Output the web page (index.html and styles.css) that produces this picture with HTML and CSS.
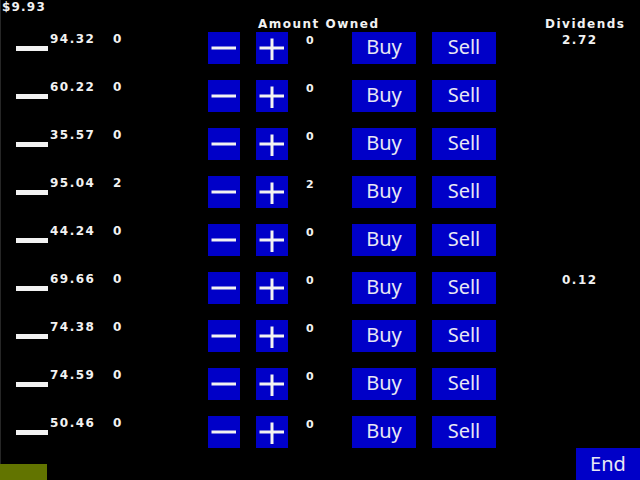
FILE: index.html
```html
<!DOCTYPE html>
<html>
<head>
<meta charset="utf-8">
<link rel="stylesheet" href="styles.css">
</head>
<body>
<div class="screen">
  <div class="money">$9.93</div>
  <div class="header">
    <span class="h-amount">Amount Owned</span>
    <span class="h-div">Dividends</span>
  </div>
  <div class="rows">
    <div class="row">
      <div class="bar-cell"><div class="bar"></div></div>
      <div class="price">94.32</div>
      <div class="owned">0</div>
      <div class="btn sq minus"><svg viewBox="0 0 32 32" width="32" height="32"><rect x="3.5" y="14.5" width="24.5" height="3" fill="#f2f2f2"/></svg></div>
      <div class="btn sq plus"><svg viewBox="0 0 32 32" width="32" height="32"><rect x="3.5" y="14.5" width="24.5" height="3" fill="#f2f2f2"/><rect x="14.5" y="6.5" width="3" height="21.5" fill="#f2f2f2"/></svg></div>
      <div class="amount">0</div>
      <div class="btn wide buy">Buy</div>
      <div class="btn wide sell">Sell</div>
      <div class="div">2.72</div>
    </div>
    <div class="row">
      <div class="bar-cell"><div class="bar"></div></div>
      <div class="price">60.22</div>
      <div class="owned">0</div>
      <div class="btn sq minus"><svg viewBox="0 0 32 32" width="32" height="32"><rect x="3.5" y="14.5" width="24.5" height="3" fill="#f2f2f2"/></svg></div>
      <div class="btn sq plus"><svg viewBox="0 0 32 32" width="32" height="32"><rect x="3.5" y="14.5" width="24.5" height="3" fill="#f2f2f2"/><rect x="14.5" y="6.5" width="3" height="21.5" fill="#f2f2f2"/></svg></div>
      <div class="amount">0</div>
      <div class="btn wide buy">Buy</div>
      <div class="btn wide sell">Sell</div>
      <div class="div"></div>
    </div>
    <div class="row">
      <div class="bar-cell"><div class="bar"></div></div>
      <div class="price">35.57</div>
      <div class="owned">0</div>
      <div class="btn sq minus"><svg viewBox="0 0 32 32" width="32" height="32"><rect x="3.5" y="14.5" width="24.5" height="3" fill="#f2f2f2"/></svg></div>
      <div class="btn sq plus"><svg viewBox="0 0 32 32" width="32" height="32"><rect x="3.5" y="14.5" width="24.5" height="3" fill="#f2f2f2"/><rect x="14.5" y="6.5" width="3" height="21.5" fill="#f2f2f2"/></svg></div>
      <div class="amount">0</div>
      <div class="btn wide buy">Buy</div>
      <div class="btn wide sell">Sell</div>
      <div class="div"></div>
    </div>
    <div class="row">
      <div class="bar-cell"><div class="bar"></div></div>
      <div class="price">95.04</div>
      <div class="owned">2</div>
      <div class="btn sq minus"><svg viewBox="0 0 32 32" width="32" height="32"><rect x="3.5" y="14.5" width="24.5" height="3" fill="#f2f2f2"/></svg></div>
      <div class="btn sq plus"><svg viewBox="0 0 32 32" width="32" height="32"><rect x="3.5" y="14.5" width="24.5" height="3" fill="#f2f2f2"/><rect x="14.5" y="6.5" width="3" height="21.5" fill="#f2f2f2"/></svg></div>
      <div class="amount">2</div>
      <div class="btn wide buy">Buy</div>
      <div class="btn wide sell">Sell</div>
      <div class="div"></div>
    </div>
    <div class="row">
      <div class="bar-cell"><div class="bar"></div></div>
      <div class="price">44.24</div>
      <div class="owned">0</div>
      <div class="btn sq minus"><svg viewBox="0 0 32 32" width="32" height="32"><rect x="3.5" y="14.5" width="24.5" height="3" fill="#f2f2f2"/></svg></div>
      <div class="btn sq plus"><svg viewBox="0 0 32 32" width="32" height="32"><rect x="3.5" y="14.5" width="24.5" height="3" fill="#f2f2f2"/><rect x="14.5" y="6.5" width="3" height="21.5" fill="#f2f2f2"/></svg></div>
      <div class="amount">0</div>
      <div class="btn wide buy">Buy</div>
      <div class="btn wide sell">Sell</div>
      <div class="div"></div>
    </div>
    <div class="row">
      <div class="bar-cell"><div class="bar"></div></div>
      <div class="price">69.66</div>
      <div class="owned">0</div>
      <div class="btn sq minus"><svg viewBox="0 0 32 32" width="32" height="32"><rect x="3.5" y="14.5" width="24.5" height="3" fill="#f2f2f2"/></svg></div>
      <div class="btn sq plus"><svg viewBox="0 0 32 32" width="32" height="32"><rect x="3.5" y="14.5" width="24.5" height="3" fill="#f2f2f2"/><rect x="14.5" y="6.5" width="3" height="21.5" fill="#f2f2f2"/></svg></div>
      <div class="amount">0</div>
      <div class="btn wide buy">Buy</div>
      <div class="btn wide sell">Sell</div>
      <div class="div">0.12</div>
    </div>
    <div class="row">
      <div class="bar-cell"><div class="bar"></div></div>
      <div class="price">74.38</div>
      <div class="owned">0</div>
      <div class="btn sq minus"><svg viewBox="0 0 32 32" width="32" height="32"><rect x="3.5" y="14.5" width="24.5" height="3" fill="#f2f2f2"/></svg></div>
      <div class="btn sq plus"><svg viewBox="0 0 32 32" width="32" height="32"><rect x="3.5" y="14.5" width="24.5" height="3" fill="#f2f2f2"/><rect x="14.5" y="6.5" width="3" height="21.5" fill="#f2f2f2"/></svg></div>
      <div class="amount">0</div>
      <div class="btn wide buy">Buy</div>
      <div class="btn wide sell">Sell</div>
      <div class="div"></div>
    </div>
    <div class="row">
      <div class="bar-cell"><div class="bar"></div></div>
      <div class="price">74.59</div>
      <div class="owned">0</div>
      <div class="btn sq minus"><svg viewBox="0 0 32 32" width="32" height="32"><rect x="3.5" y="14.5" width="24.5" height="3" fill="#f2f2f2"/></svg></div>
      <div class="btn sq plus"><svg viewBox="0 0 32 32" width="32" height="32"><rect x="3.5" y="14.5" width="24.5" height="3" fill="#f2f2f2"/><rect x="14.5" y="6.5" width="3" height="21.5" fill="#f2f2f2"/></svg></div>
      <div class="amount">0</div>
      <div class="btn wide buy">Buy</div>
      <div class="btn wide sell">Sell</div>
      <div class="div"></div>
    </div>
    <div class="row">
      <div class="bar-cell"><div class="bar"></div></div>
      <div class="price">50.46</div>
      <div class="owned">0</div>
      <div class="btn sq minus"><svg viewBox="0 0 32 32" width="32" height="32"><rect x="3.5" y="14.5" width="24.5" height="3" fill="#f2f2f2"/></svg></div>
      <div class="btn sq plus"><svg viewBox="0 0 32 32" width="32" height="32"><rect x="3.5" y="14.5" width="24.5" height="3" fill="#f2f2f2"/><rect x="14.5" y="6.5" width="3" height="21.5" fill="#f2f2f2"/></svg></div>
      <div class="amount">0</div>
      <div class="btn wide buy">Buy</div>
      <div class="btn wide sell">Sell</div>
      <div class="div"></div>
    </div>
  </div>
  <div class="footer">
    <div class="green"></div>
    <div class="btn end">End</div>
  </div>
</div>
</body>
</html>
```

FILE: styles.css
```css
html, body {
  margin: 0;
  padding: 0;
  background: #000;
}
.screen {
  width: 640px;
  height: 480px;
  overflow: hidden;
  background: #000;
  color: #f2f2f2;
  font-family: "DejaVu Sans", sans-serif;
  font-weight: bold;
  font-size: 12px;
  line-height: 13px;
  letter-spacing: 1.5px;
  display: flex;
  flex-direction: column;
  box-shadow: inset 1px 0 0 #262626;
}
.money {
  height: 16px;
  padding-top: 1px;
  box-sizing: border-box;
  padding-left: 2px;
  letter-spacing: 1.2px;
}
.header {
  height: 16px;
  display: flex;
  padding-top: 2px;
  box-sizing: border-box;
}
.h-amount {
  margin-left: 258px;
  width: 287px;
}
.rows {
  height: 416px;
  display: flex;
  flex-direction: column;
  gap: 16px;
}
.row {
  height: 32px;
  display: flex;
  flex-shrink: 0;
}
.bar-cell {
  width: 32px;
  padding-left: 16px;
}
.bar {
  margin-top: 14px;
  height: 5px;
  background: #f2f2f2;
}
.price {
  width: 63px;
  padding-left: 2px;
  padding-top: 1px;
}
.owned {
  width: 95px;
  padding-top: 1px;
}
.btn {
  background: #0000c8;
  color: #e8e8f4;
  font-family: "Noto Sans", sans-serif;
  font-weight: normal;
  font-size: 20px;
  letter-spacing: 0;
  display: flex;
  align-items: center;
  justify-content: center;
  height: 32px;
  box-sizing: border-box;
}
.sq {
  width: 32px;
}
.minus {
  margin-right: 16px;
}
.amount {
  width: 46px;
  padding-left: 18px;
  padding-top: 2px;
  font-size: 11px;
}
.wide {
  width: 64px;
  line-height: 30px;
  padding-bottom: 2px;
}
.buy {
  margin-right: 16px;
}
.div {
  padding-left: 66px;
  width: 78px;
  padding-top: 2px;
}
.footer {
  height: 32px;
  display: flex;
  justify-content: space-between;
  align-items: flex-end;
}
.green {
  width: 47px;
  height: 16px;
  background: #627400;
}
.end {
  width: 64px;
  line-height: 32px;
}
```
